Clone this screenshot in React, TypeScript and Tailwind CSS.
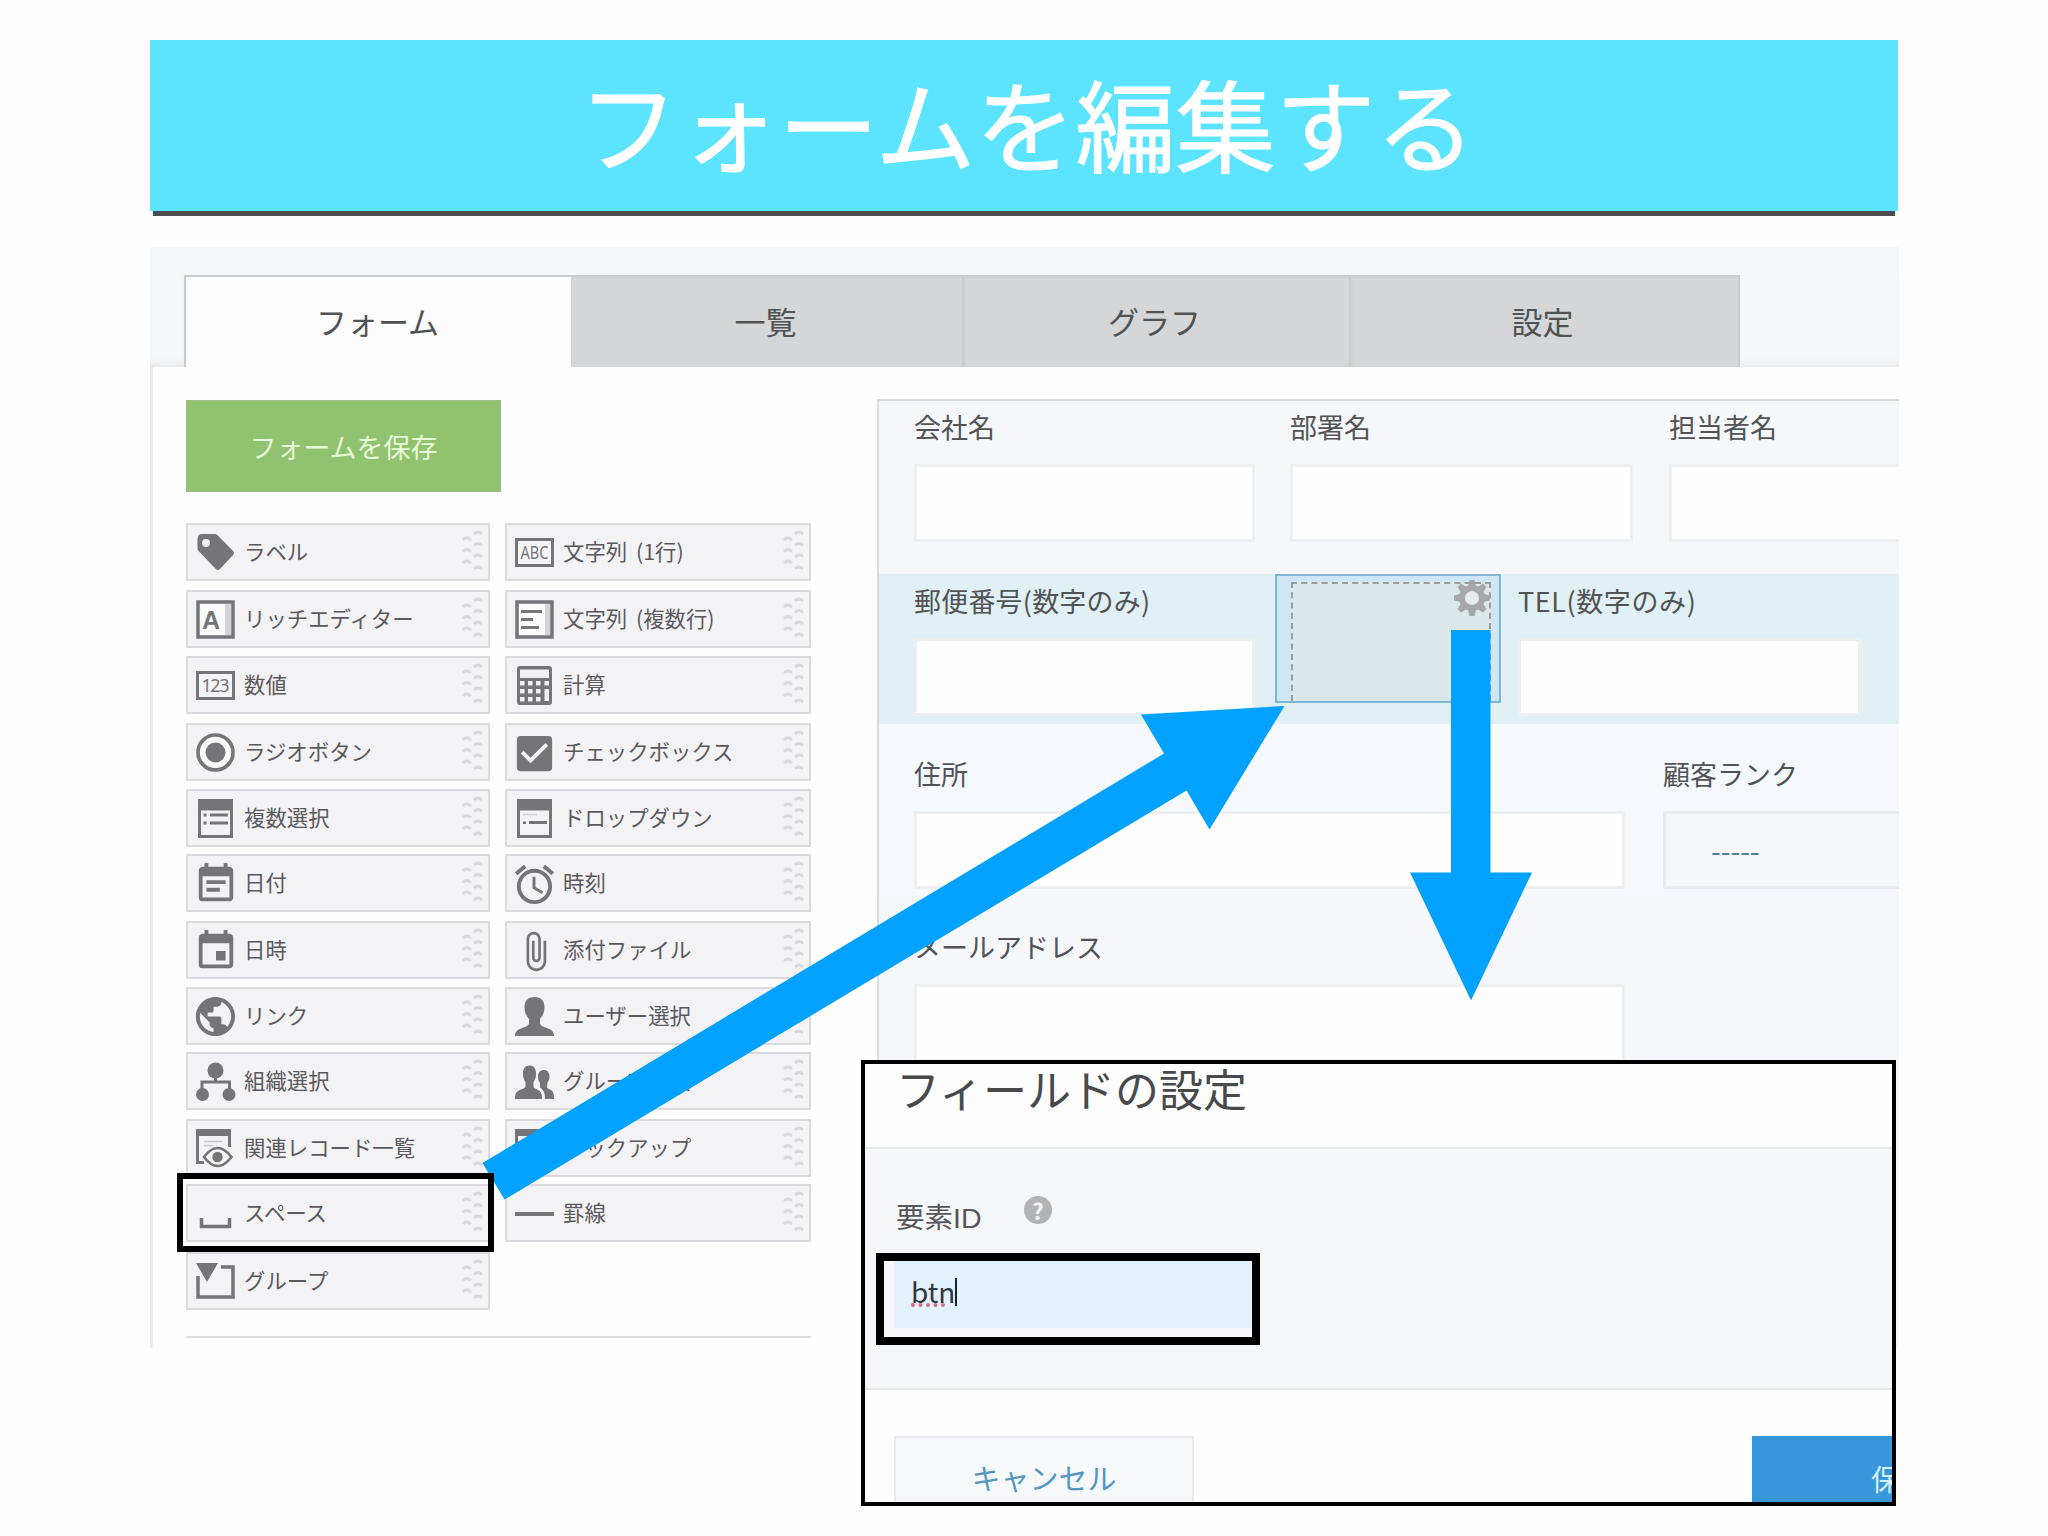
import type { ReactNode } from 'react';
import { MdAlarm, MdAttachFile, MdCheckBox, MdEvent, MdEventNote, MdPublic } from 'react-icons/md';

interface PaletteField {
  label: string;
  icon: ReactNode;
}

const ICON = '#757478';

function Glyph({ children }: { children: ReactNode }) {
  return (
    <svg viewBox="0 0 40 40" className="h-10 w-10" fill={ICON} stroke="none">
      {children}
    </svg>
  );
}

function WindowFrame({ children }: { children?: ReactNode }) {
  return (
    <Glyph>
      <rect x="3.5" y="1.5" width="32" height="36" fill="#f3f2f5" stroke={ICON} strokeWidth="3" />
      <rect x="2" y="0" width="35" height="11.5" />
      {children}
    </Glyph>
  );
}

const LEFT_FIELDS: PaletteField[] = [
  {
    label: 'ラベル',
    icon: (
      <Glyph>
        <path
          fillRule="evenodd"
          d="M6 1h12c2 0 3 .6 4.300 1.900L37 18c1.300 1.400 1.300 2.600 0 4L24 36c-1.400 1.400-2.800 1.400-4.200 0L3 18.500C2 17.400 1.500 16.500 1.500 15V6.500C1.500 3 3 1 6 1Zm4 5a4 4 0 1 0 0 8 4 4 0 0 0 0-8Z"
        />
      </Glyph>
    ),
  },
  {
    label: 'リッチエディター',
    icon: (
      <Glyph>
        <rect x="2" y="2" width="35" height="35" fill="#fbfbfc" stroke={ICON} strokeWidth="3.500" />
        <rect x="29" y="4" width="6" height="31" fill="#d3d2d6" />
        <text x="15" y="28.500" fontSize="25" fontWeight="700" textAnchor="middle" fontFamily="Liberation Sans, sans-serif">
          A
        </text>
      </Glyph>
    ),
  },
  {
    label: '数値',
    icon: (
      <Glyph>
        <rect x="1.500" y="6.500" width="36" height="26" fill="#f5f4f6" stroke={ICON} strokeWidth="3" />
        <text x="19.500" y="26" fontSize="18" textAnchor="middle" textLength="28" fontFamily="Noto Sans, sans-serif">
          123
        </text>
      </Glyph>
    ),
  },
  {
    label: 'ラジオボタン',
    icon: (
      <Glyph>
        <circle cx="19.500" cy="19.500" r="17.500" fill="#fafafb" stroke={ICON} strokeWidth="3.600" />
        <circle cx="19.500" cy="19.500" r="10" />
      </Glyph>
    ),
  },
  {
    label: '複数選択',
    icon: (
      <WindowFrame>
        <path d="M14 14.500h18v3H14zM14 22.500h18v3H14zM7.500 14.500h3v3h-3zM7.500 22.500h3v3h-3z" />
      </WindowFrame>
    ),
  },
  { label: '日付', icon: <MdEventNote size={46} color={ICON} className="mr-px shrink-0" /> },
  { label: '日時', icon: <MdEvent size={46} color={ICON} className="mr-px shrink-0" /> },
  { label: 'リンク', icon: <MdPublic size={47} color={ICON} className="mr-px mb-px shrink-0" /> },
  {
    label: '組織選択',
    icon: (
      <Glyph>
        <circle cx="19.500" cy="8.500" r="8" />
        <circle cx="6.500" cy="32.500" r="6.500" />
        <circle cx="33" cy="32.500" r="6.500" />
        <path d="M6 28v-8h27.500v8M19.500 14v6" fill="none" stroke={ICON} strokeWidth="3" />
      </Glyph>
    ),
  },
  {
    label: '関連レコード一覧',
    icon: (
      <Glyph>
        <path d="M0 0h35v7H0z" />
        <path d="M1.500 5v28.500H8M33.500 5v13" fill="none" stroke={ICON} strokeWidth="3" />
        <path d="M8 12.500h18M8 16.500h9" stroke="#c9c8cc" strokeWidth="1.500" />
        <path d="M8 28q13.500-18 27.500 0-14 18-27.500 0Z" fill="#f6f5f7" stroke={ICON} strokeWidth="2.600" />
        <circle cx="21.500" cy="28" r="5.200" />
      </Glyph>
    ),
  },
  {
    label: 'スペース',
    icon: (
      <Glyph>
        <path d="M5.500 24v8.500h28V24" fill="none" stroke={ICON} strokeWidth="3.500" />
      </Glyph>
    ),
  },
  {
    label: 'グループ',
    icon: (
      <Glyph>
        <path d="M0 1h22L11 20z" />
        <path d="M2 14v21h35V5H25" fill="none" stroke={ICON} strokeWidth="3.500" />
      </Glyph>
    ),
  },
];

const RIGHT_FIELDS: PaletteField[] = [
  {
    label: '文字列 (1行)',
    icon: (
      <Glyph>
        <rect x="1.500" y="6.500" width="36" height="26" fill="#f5f4f6" stroke={ICON} strokeWidth="3" />
        <text
          x="19.500"
          y="26"
          fontSize="18"
          textAnchor="middle"
          textLength="28"
          lengthAdjust="spacingAndGlyphs"
          fontFamily="Noto Sans, sans-serif"
        >
          ABC
        </text>
      </Glyph>
    ),
  },
  {
    label: '文字列 (複数行)',
    icon: (
      <Glyph>
        <rect x="2" y="2" width="35" height="35" fill="#fbfbfc" stroke={ICON} strokeWidth="3.500" />
        <rect x="30" y="4" width="5" height="31" fill="#d3d2d6" />
        <path d="M6 10h21v3H6zM6 18h12v3H6zM6 26h18v3H6z" />
      </Glyph>
    ),
  },
  {
    label: '計算',
    icon: (
      <Glyph>
        <rect x="2" y="0" width="35" height="39" rx="3" />
        <g fill="#f0eff2">
          <rect x="5" y="3.500" width="29" height="8.500" />
          <path d="M5 15h4.500v4.500H5zM13 15h4.500v4.500H13zM21 15h4.500v4.500H21zM29.500 15H34v4.500h-4.500zM5 23h4.500v4.500H5zM13 23h4.500v4.500H13zM21 23h4.500v4.500H21zM29.500 23H34v12h-4.500zM5 31h4.500v4.500H5zM13 31h4.500v4.500H13zM21 31h4.500v4.500H21z" />
        </g>
      </Glyph>
    ),
  },
  { label: 'チェックボックス', icon: <MdCheckBox size={47} color={ICON} className="mr-px shrink-0" /> },
  {
    label: 'ドロップダウン',
    icon: (
      <WindowFrame>
        <path d="M14 22h18v3H14zM8 22.500h3v2.500H8z" />
        <path d="M8 15.500h14" stroke="#cfced2" strokeWidth="1.500" />
      </WindowFrame>
    ),
  },
  { label: '時刻', icon: <MdAlarm size={47} color={ICON} className="mr-px shrink-0" /> },
  { label: '添付ファイル', icon: <MdAttachFile size={43} color={ICON} className="shrink-0" /> },
  {
    label: 'ユーザー選択',
    icon: (
      <Glyph>
        <path d="M19.500 0c6.500 0 10 4 10 10 0 5.500-2 9-4.500 12v4c0 2.500 3 3.500 7 5 4.500 1.700 7 3.500 7 8H0c0-4.500 2.500-6.300 7-8 4-1.500 7-2.500 7-5v-4c-2.500-3-4.500-6.500-4.500-12 0-6 3.500-10 10-10Z" />
      </Glyph>
    ),
  },
  {
    label: 'グループ選択',
    icon: (
      <Glyph>
        <path d="M14.500 3.500c4.500 0 6.500 3.500 6.500 8 0 4-1 6.500-2.500 8.500v4c0 2 2 2.500 4.500 4 2.800 1.600 4 3 4 9H0c0-6 1.500-7.500 5-9 3-1.300 5.500-2 5.500-4v-4C9 18 8 15.500 8 11.500c0-4.500 2-8 6.500-8Z" />
        <path d="M29 8c3.600 0 5.500 2.600 5.500 6.500 0 3-1 5-2.300 6.500v4c0 1.500 1.500 2 3.500 3 2.600 1.400 3.300 3 3.300 9H30c0-7-2-9.500-5-11.500V21c-1.200-1.500-2-3.500-2-6.500C23 10.600 25.400 8 29 8Z" />
      </Glyph>
    ),
  },
  {
    label: 'ルックアップ',
    icon: (
      <Glyph>
        <path d="M0 0h35v7H0z" />
        <path d="M1.500 5v28.500h32V5" fill="none" stroke={ICON} strokeWidth="3" />
      </Glyph>
    ),
  },
  {
    label: '罫線',
    icon: (
      <Glyph>
        <rect x="0" y="18" width="39" height="4" />
      </Glyph>
    ),
  },
];

const TABS = [
  { label: 'フォーム', className: 'w-[387px] bg-[#fdfdfe] border-l-2' },
  { label: '一覧', className: 'w-[391px] bg-[#d5d6d8]' },
  { label: 'グラフ', className: 'w-[387px] bg-[#d5d6d8] shadow-[inset_3px_0_3px_-1px_#c6c7c9]' },
  { label: '設定', className: 'w-[391px] bg-[#d5d6d8] border-r-2 shadow-[inset_3px_0_3px_-1px_#c6c7c9]' },
];

function DragHandle() {
  return (
    <svg viewBox="0 0 21 42" className="-mt-1 ml-auto h-[42px] w-[21px]" fill="none" stroke="#dad8dd" strokeWidth="2.800">
      {[8, 19.5, 31].map((y) => (
        <path key={y} d={`M1 ${y + 3}q3.500-4 8 0`} />
      ))}
      {[2, 13.5, 25, 37].map((y) => (
        <path key={y} d={`M12 ${y + 3}q4-4 8 0`} />
      ))}
    </svg>
  );
}

function PaletteColumn({ fields, className }: { fields: PaletteField[]; className: string }) {
  return (
    <ul
      className={`grid grid-rows-[67px_66px_67px_66px_65px_67px_66px_65px_67px_65px_68px_58px] ${className}`}
    >
      {fields.map((field) => (
        <li
          key={field.label}
          className="flex h-[58px] items-center border-2 border-[#dbd9de] bg-[#f3f2f5] pr-[5px] pl-[inherit]"
        >
          <span className="mt-0.5 ml-2 flex h-10 w-10 shrink-0 items-center justify-center">{field.icon}</span>
          <span className="-mt-0.5 ml-2 text-[21.4px] leading-none whitespace-nowrap text-[#5a595d] [word-spacing:4px]">
            {field.label}
          </span>
          <DragHandle />
        </li>
      ))}
    </ul>
  );
}

function FormField({ label, width }: { label: string; width: string }) {
  return (
    <div className={`shrink-0 ${width}`}>
      <div className="h-[51px] text-[27px] leading-[27px] whitespace-nowrap text-[#515356]">{label}</div>
      <div className="h-[78px] border-[3px] border-[#edeff1] bg-[#fefefe]" />
    </div>
  );
}

// Selected blank field, with its settings gear
function SpaceField() {
  return (
    <div className="relative h-[129px] w-[226px] shrink-0 border-2 border-[#7fb6d3] bg-[#cfe7f4] pt-1.5 pr-2 pl-3.5">
      <div className="h-full border-2 border-b-0 border-dashed border-[#9a9d9d] bg-[#dae8ea]" />
      <svg viewBox="-20 -20 40 40" className="absolute top-0.5 right-[7px] h-10 w-10" fill="#a6a7a8">
        {[0, 45, 90, 135, 180, 225, 270, 315].map((angle) => (
          <path key={angle} d="M-4-11h8L2.500-18h-5z" transform={`rotate(${angle})`} />
        ))}
        <circle r="10" fill="#e6eaea" stroke="#a6a7a8" strokeWidth="6" />
      </svg>
    </div>
  );
}

function FormPreview() {
  return (
    <div className="mt-[32px] flex-1 overflow-hidden border-t-2 border-l-2 border-[#d9dadd] bg-[#f6f7fa]">
      <div className="flex h-[173px] pt-[12px] pl-[35px]">
        <FormField label="会社名" width="w-[341px] mr-[35px]" />
        <FormField label="部署名" width="w-[343px] mr-[36px]" />
        <FormField label="担当者名" width="w-[341px]" />
      </div>
      <div className="flex h-[150px] bg-[#e0f0f4] pl-[35px]">
        <div className="pt-[13px]">
          <FormField label="郵便番号(数字のみ)" width="w-[341px] mr-[20px] tracking-[0.2px]" />
        </div>
        <SpaceField />
        <div className="pt-[13px]">
          <FormField label="TEL(数字のみ)" width="w-[343px] ml-[17px] tracking-[0.6px]" />
        </div>
      </div>
      <div className="flex h-[173px] bg-[#f5f8fc] pt-[36px] pl-[35px]">
        <FormField label="住所" width="w-[711px] mr-[38px]" />
        <div className="w-[341px] shrink-0">
          <div className="h-[51px] text-[27px] leading-[27px] text-[#515356]">顧客ランク</div>
          <div className="flex h-[78px] items-center border-[3px] border-[#e9ebef] bg-[#f5f7fb] pl-[45px] text-[28px] leading-none text-[#4f7e96]">
            -----
          </div>
        </div>
      </div>
      <div className="flex pt-[36px] pl-[35px]">
        <FormField label="メールアドレス" width="w-[711px]" />
      </div>
    </div>
  );
}

function FieldSettingsDialog() {
  return (
    <div className="absolute top-[1060px] left-[861px] flex h-[446px] w-[1035px] flex-col overflow-hidden border-4 border-black bg-[#fefefe]">
      <div className="h-[83px] shrink-0 pt-[2px] pl-[31px] text-[44px] leading-[44px] text-[#48494b]">
        フィールドの設定
      </div>
      <div className="h-[243px] shrink-0 border-y-2 border-[#e6e7ea] bg-[#f6f7f9] pt-[54px] pl-[11px]">
        <div className="flex h-[50px] pl-[20px] text-[28.500px] leading-[28px] text-[#545659]">
          <span className="mt-px w-[128px] font-['Liberation_Sans','Noto_Sans_CJK_JP',sans-serif]">要素ID</span>
          <span className="-mt-[7px] flex h-7 w-7 items-center justify-center rounded-full bg-[#b2b3b5] text-[22px] leading-none font-bold text-[#f6f7fa]">
            ?
          </span>
        </div>
        <div className="h-[92px] w-[384px] border-8 border-black bg-[#f7f7fb] pl-[10px]">
          <div className="flex h-[67px] items-center bg-[#e2f1fb] pl-[17px]">
            <span className="relative -mt-2 text-[28px] leading-[28px] text-[#2e3942]">
              btn
              <span className="absolute -bottom-0.5 left-0 w-[34px] border-b-4 border-dotted border-[#dd6b87]" />
            </span>
            <span className="-mt-1.5 h-7 w-0.5 bg-[#1c2126]" />
          </div>
        </div>
      </div>
      <div className="flex shrink-0 justify-between pt-[46px] pl-[29px] text-[29px] leading-none">
        <button className="flex h-[90px] w-[300px] justify-center border-2 border-[#e9e8ed] bg-[#f7f8fa] pt-[25px] text-[#5596c1]">
          キャンセル
        </button>
        <div className="w-[140px]">
          <button className="h-[90px] w-[296px] bg-[#3897da] text-[#d9f0fb]">
            <span className="-mt-[6px] block">保存</span>
          </button>
        </div>
      </div>
    </div>
  );
}

export default function App() {
  return (
    <div className="relative h-[1536px] w-[2048px] overflow-hidden bg-[#fefefe] pt-10 pl-[150px] font-['Noto_Sans_CJK_JP',sans-serif]">
      <header className="w-[1748px]">
        <h1 className="flex h-[171px] items-center justify-center bg-[#5ce3fe] pb-2 pl-1.5 text-[100px] leading-none text-white [-webkit-text-stroke:1px_white]">
          フォームを編集する
        </h1>
        <div className="mx-[3px] h-[5px] bg-[#4b4d50]" />
      </header>

      <main className="mt-[31px] w-[1749px]">
        <nav className="flex h-[120px] bg-[#f6f7f9] pt-[28px]">
          <div className="w-[34px] shadow-[inset_0_-7px_6px_-3px_#e7e8eb]" />
          {TABS.map((tab) => (
            <div
              key={tab.label}
              className={`flex items-center justify-center border-t-2 border-[#c9cacc] pr-0.5 pb-1 text-[31px] leading-none text-[#515254] ${tab.className}`}
            >
              {tab.label}
            </div>
          ))}
          <div className="flex-1 shadow-[inset_0_-7px_6px_-3px_#e7e8eb]" />
        </nav>

        <div className="flex h-[981px] border-l-[3px] border-[#eaebef]">
          <section className="mr-[66px] w-[658px] shrink-0 pt-[33px] pl-[33px]">
            <button className="flex h-[92px] w-[315px] items-center justify-center border border-[#9fbb8c] bg-[#91c26f] text-[27px] leading-none text-[#e6fbd8]">
              フォームを保存
            </button>
            <div className="mt-[31px] flex gap-[15px]">
              <PaletteColumn fields={LEFT_FIELDS} className="w-[304px]" />
              <PaletteColumn fields={RIGHT_FIELDS} className="w-[306px]" />
            </div>
            <hr className="mt-[26px] border-t-2 border-[#dcdcdf]" />
          </section>
          <FormPreview />
        </div>
      </main>

      {/* Walkthrough arrows */}
      <svg viewBox="0 0 2048 1536" className="pointer-events-none absolute inset-0" fill="#00a1ff">
        <path d="M482.500 1163 1164 753.500 1141 714.500 1284.500 706 1209.500 829.500 1186.500 790.500 504.500 1199.500Z" />
        <path d="M1451 630h39.500v242.500H1532L1471 1000.500 1410 872.500h41Z" />
      </svg>
      <div className="absolute top-[1173px] left-[177px] h-[79px] w-[317px] border-6 border-black" />

      <FieldSettingsDialog />
    </div>
  );
}
